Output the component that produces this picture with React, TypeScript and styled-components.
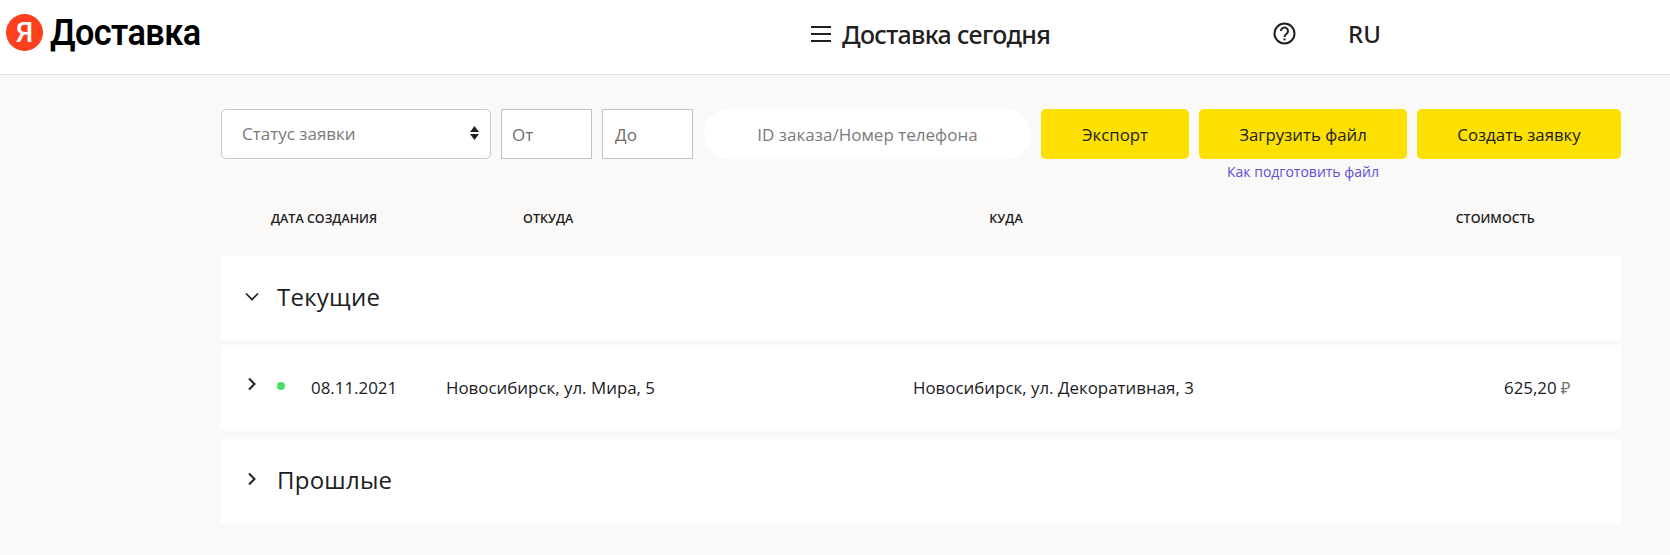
import React from "react";
import styled, { createGlobalStyle } from "styled-components";

const Global = createGlobalStyle`
  html, body { margin: 0; padding: 0; background: #faf9f7; }
  body { font-family: "Open Sans", "Noto Sans", sans-serif; color: #21201f; }
  * { box-sizing: border-box; }
`;

const Page = styled.div`
  width: 1670px;
  height: 555px;
  overflow: hidden;
  background: #faf9f7;
`;

const Header = styled.header`
  height: 75px;
  background: #fff;
  border-bottom: 1px solid #e2e1de;
  display: flex;
  align-items: flex-start;
`;

const Brand = styled.div`
  width: 811px;
  padding: 14px 0 0 6px;
  display: flex;
  align-items: flex-start;
  gap: 7px;
`;

const LogoMark = styled.div`
  width: 37px;
  height: 37px;
  border-radius: 50%;
  background: #fc3f1d;
  color: #fff;
  display: flex;
  align-items: center;
  justify-content: center;
  font: 500 28px/1 "Roboto", sans-serif;
`;

const BrandName = styled.div`
  font: 600 37px/38px "Roboto", sans-serif;
  letter-spacing: -0.6px;
  color: #000;
  transform: scaleX(0.925);
  transform-origin: left center;
`;

const Nav = styled.div`
  width: 462px;
  padding-top: 18px;
  display: flex;
  align-items: center;
  gap: 11px;
`;

const NavTitle = styled.div`
  font: 500 25px/32px "Noto Sans", sans-serif;
  letter-spacing: -0.65px;
`;

const IconSlot = styled.div`
  width: 75px;
  padding-top: 22px;
  display: flex;
`;

const Lang = styled.div`
  font: 500 24px/32px "Noto Sans", sans-serif;
  padding-top: 18px;
`;

const Toolbar = styled.div`
  display: flex;
  align-items: flex-start;
  padding: 34px 0 0 221px;
`;

const SelectBox = styled.div`
  width: 270px;
  height: 50px;
  background: #fff;
  border: 1px solid #c9c7c5;
  border-radius: 5px;
  display: flex;
  align-items: center;
  justify-content: space-between;
  padding: 0 11px 2px 20px;
  font-size: 17px;
  color: #7d7a78;
`;

const Arrows = styled.div`
  display: flex;
  flex-direction: column;
  gap: 2px;
`;

const DateBox = styled.div<{ $pad: number }>`
  width: 91px;
  height: 50px;
  margin-left: 10px;
  background: #fff;
  border: 1px solid #c4c2c0;
  display: flex;
  align-items: center;
  padding-left: ${(p) => p.$pad}px;
  font-size: 17px;
  color: #6f6c6a;
`;

const Search = styled.div`
  width: 327px;
  height: 50px;
  margin: 0 10px 0 11px;
  border-radius: 25px;
  background: #fff;
  display: flex;
  align-items: center;
  justify-content: center;
  font-size: 17px;
  color: #7d7a78;
`;

const ActionColumn = styled.div<{ $width: number; $gap?: number }>`
  width: ${(p) => p.$width}px;
  margin-right: ${(p) => p.$gap ?? 0}px;
  display: flex;
  flex-direction: column;
  align-items: center;
`;

const YellowButton = styled.div`
  width: 100%;
  height: 50px;
  border-radius: 5px;
  background: #fce000;
  display: flex;
  align-items: center;
  justify-content: center;
  font-size: 16.8px;
  color: #21201f;
`;

const HelpLink = styled.div`
  margin-top: 4px;
  font-size: 14px;
  line-height: 18px;
  color: #5c4fd6;
`;

const Columns = styled.div`
  display: flex;
  margin: 26px 0 0;
  height: 22px;
  align-items: center;
  font-size: 12.5px;
  font-weight: 600;
  color: #21201f;
`;

const ColumnTitle = styled.div<{ $left: number }>`
  margin-left: ${(p) => p.$left}px;
  white-space: nowrap;
`;

const CardList = styled.div`
  margin: 27px 49px 0 221px;
`;

const Card = styled.section<{ $after: number }>`
  margin-bottom: ${(p) => p.$after}px;
  height: 84px;
  background: #fff;
  display: flex;
  align-items: center;
`;

const ChevronSlot = styled.div<{ $lift: number }>`
  width: 56px;
  padding: 0 0 ${(p) => p.$lift}px 24px;
  display: flex;
  align-items: center;
`;

const GroupTitle = styled.div`
  font-size: 24px;
  letter-spacing: 0.25px;
  color: #21201f;
  padding-bottom: 4px;
`;

const RowCells = styled.div`
  display: flex;
  align-items: center;
  flex: 1;
  font-size: 16.9px;
  height: 100%;
`;

const StatusDot = styled.span`
  width: 8px;
  height: 8px;
  border-radius: 50%;
  background: #4cde64;
  margin: -2px 26px 0 0;
`;

const Cell = styled.div<{ $width: number }>`
  width: ${(p) => p.$width}px;
  white-space: nowrap;
`;

const Currency = styled.span`
  color: #77746f;
  margin-left: 4px;
`;

const Chevron = ({ down }: { down?: boolean }) => (
  <svg width="14" height="14" viewBox="0 0 14 14" fill="none" stroke="#21201f" strokeWidth={down ? 1.7 : 2}>
    {down ? <path d="M1 4.5 7 10.5l6-6" /> : <path d="M4 1.5 9.5 7 4 12.5" />}
  </svg>
);

export default function App() {
  return (
    <Page>
      <Global />
      <Header>
        <Brand>
          <LogoMark>Я</LogoMark>
          <BrandName>Доставка</BrandName>
        </Brand>
        <Nav>
          <svg width="20" height="18" viewBox="0 0 20 18" stroke="#21201f" strokeWidth="2">
            <path d="M0 2h20M0 9h20M0 16h20" />
          </svg>
          <NavTitle>Доставка сегодня</NavTitle>
        </Nav>
        <IconSlot>
          <svg width="23" height="23" viewBox="0 0 23 23" fill="none" stroke="#21201f" strokeWidth="2">
            <circle cx="11.5" cy="11.5" r="10" />
            <path d="M8 9a3.5 3.5 0 1 1 5.6 2.8c-1.3 1-2.1 1.6-2.1 3.2" />
            <path d="M11.5 16.4v2" />
          </svg>
        </IconSlot>
        <Lang>RU</Lang>
      </Header>
      <Toolbar>
        <SelectBox>
          Статус заявки
          <Arrows>
            <svg width="9" height="6" viewBox="0 0 9 6" fill="#21201f"><path d="M4.5 0 9 6H0z" /></svg>
            <svg width="9" height="6" viewBox="0 0 9 6" fill="#21201f"><path d="M0 0h9L4.5 6z" /></svg>
          </Arrows>
        </SelectBox>
        <DateBox $pad={10}>От</DateBox>
        <DateBox $pad={12}>До</DateBox>
        <Search>ID заказа/Номер телефона</Search>
        <ActionColumn $width={148} $gap={10}>
          <YellowButton>Экспорт</YellowButton>
        </ActionColumn>
        <ActionColumn $width={208} $gap={10}>
          <YellowButton>Загрузить файл</YellowButton>
          <HelpLink>Как подготовить файл</HelpLink>
        </ActionColumn>
        <ActionColumn $width={204}>
          <YellowButton>Создать заявку</YellowButton>
        </ActionColumn>
      </Toolbar>
      <Columns>
        <ColumnTitle $left={271}>ДАТА СОЗДАНИЯ</ColumnTitle>
        <ColumnTitle $left={146}>ОТКУДА</ColumnTitle>
        <ColumnTitle $left={416}>КУДА</ColumnTitle>
        <ColumnTitle $left={433}>СТОИМОСТЬ</ColumnTitle>
      </Columns>
      <CardList>
        <Card $after={5}>
          <ChevronSlot $lift={4}><Chevron down /></ChevronSlot>
          <GroupTitle>Текущие</GroupTitle>
        </Card>
        <Card $after={10}>
          <ChevronSlot $lift={6}><Chevron /></ChevronSlot>
          <RowCells>
            <StatusDot />
            <Cell $width={135}>08.11.2021</Cell>
            <Cell $width={467}>Новосибирск, ул. Мира, 5</Cell>
            <Cell $width={591}>Новосибирск, ул. Декоративная, 3</Cell>
            <Cell $width={80}>625,20<Currency>₽</Currency></Cell>
          </RowCells>
        </Card>
        <Card $after={0}>
          <ChevronSlot $lift={4}><Chevron /></ChevronSlot>
          <GroupTitle>Прошлые</GroupTitle>
        </Card>
      </CardList>
    </Page>
  );
}
